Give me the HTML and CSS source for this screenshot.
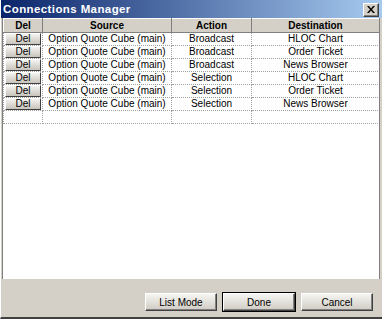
FILE: index.html
```html
<!DOCTYPE html>
<html lang="en">
<head>
    <meta charset="UTF-8">
    <title>Connections Manager</title>
    <link rel="stylesheet" href="styles.css">
</head>
<body>
    <div class="window">
        <div class="titlebar">
            <span class="title">Connections Manager</span>
            <button class="close" type="button">
                <svg width="8" height="7" viewBox="0 0 8 7"><path d="M0 0h2l2 2.5 2-2.5h2l-3 3.5 3 3.5h-2l-2-2.5-2 2.5h-2l3-3.5z" fill="#000"/></svg>
            </button>
        </div>
        <div class="grid-area">
            <table class="grid">
                <colgroup>
                    <col class="c-del">
                    <col class="c-src">
                    <col class="c-act">
                    <col class="c-dst">
                </colgroup>
                <thead>
                    <tr>
                        <th>Del</th>
                        <th>Source</th>
                        <th>Action</th>
                        <th>Destination</th>
                    </tr>
                </thead>
                <tbody>
                    <tr>
                        <td class="del-cell"><button class="del">Del</button></td>
                        <td>Option Quote Cube (main)</td>
                        <td>Broadcast</td>
                        <td>HLOC Chart</td>
                    </tr>
                    <tr>
                        <td class="del-cell"><button class="del">Del</button></td>
                        <td>Option Quote Cube (main)</td>
                        <td>Broadcast</td>
                        <td>Order Ticket</td>
                    </tr>
                    <tr>
                        <td class="del-cell"><button class="del">Del</button></td>
                        <td>Option Quote Cube (main)</td>
                        <td>Broadcast</td>
                        <td>News Browser</td>
                    </tr>
                    <tr>
                        <td class="del-cell"><button class="del">Del</button></td>
                        <td>Option Quote Cube (main)</td>
                        <td>Selection</td>
                        <td>HLOC Chart</td>
                    </tr>
                    <tr>
                        <td class="del-cell"><button class="del">Del</button></td>
                        <td>Option Quote Cube (main)</td>
                        <td>Selection</td>
                        <td>Order Ticket</td>
                    </tr>
                    <tr>
                        <td class="del-cell"><button class="del">Del</button></td>
                        <td>Option Quote Cube (main)</td>
                        <td>Selection</td>
                        <td>News Browser</td>
                    </tr>
                    <tr class="empty">
                        <td></td>
                        <td></td>
                        <td></td>
                        <td></td>
                    </tr>
                </tbody>
            </table>
        </div>
        <div class="footer">
            <button class="btn">List Mode</button>
            <button class="btn default">Done</button>
            <button class="btn">Cancel</button>
        </div>
    </div>
</body>
</html>
```

FILE: styles.css
```css
body {
    margin: 0;
    padding: 0;
    font-family: "Liberation Sans", Arial, sans-serif;
    background: #d4d0c8;
}
.window {
    width: 382px;
    height: 319px;
    box-sizing: border-box;
    background: #d4d0c8;
    border-left: 1px solid #ffffff;
    border-bottom: 2px solid #404040;
    display: flex;
    flex-direction: column;
}
.titlebar {
    height: 18px;
    flex: none;
    display: flex;
    align-items: center;
    justify-content: space-between;
    padding: 0 3px 0 2px;
    background: linear-gradient(to right, #0a246a, #a6caf0);
}
.title {
    color: #fff;
    font-weight: bold;
    font-size: 11.5px;
    letter-spacing: 0.4px;
}
.close {
    width: 16px;
    height: 14px;
    padding: 0;
    margin-top: 1px;
    display: flex;
    align-items: center;
    justify-content: center;
    background: #d4d0c8;
    border: 1px solid;
    border-color: #fff #404040 #404040 #fff;
    box-shadow: inset -1px -1px 0 #808080;
}
.grid-area {
    flex: 1;
    margin: 0 2px 0 1px;
    background: #fff;
    border-left: 1px solid #808080;
    border-right: 1px solid #808080;
    overflow: hidden;
}
.grid {
    border-collapse: collapse;
    table-layout: fixed;
    width: 376px;
    font-size: 10px;
    color: #000;
}
.c-del { width: 39px; }
.c-src { width: 129px; }
.c-act { width: 80px; }
.c-dst { width: 128px; }
.grid th {
    height: 14px;
    padding: 0;
    box-sizing: border-box;
    background: #d4d0c8;
    font-weight: bold;
    font-size: 10px;
    border-top: 1px solid #fff;
    border-left: 1px solid #fff;
    border-right: 1px solid #808080;
    border-bottom: 1px solid #808080;
    line-height: 12px;
}
.grid td {
    height: 13px;
    padding: 0;
    box-sizing: border-box;
    text-align: center;
    line-height: 12px;
    border: 1px dotted #a0a0a0;
    white-space: nowrap;
    overflow: hidden;
}
.grid td.del-cell {
    padding: 0 1px;
}
.del {
    display: block;
    width: 100%;
    height: 12px;
    padding: 0;
    font-family: "Liberation Sans", Arial, sans-serif;
    font-size: 10px;
    line-height: 10px;
    color: #000;
    background: linear-gradient(#f4f3f0, #c8c4bc);
    border: 1px solid;
    border-color: #ffffff #404040 #404040 #ffffff;
}
.footer {
    flex: none;
    height: 38px;
    display: flex;
    justify-content: flex-end;
    align-items: flex-start;
    gap: 6px;
    padding: 14px 9px 0 0;
    box-sizing: border-box;
}
.btn {
    width: 72px;
    height: 18px;
    padding: 0;
    font-family: "Liberation Sans", Arial, sans-serif;
    font-size: 10px;
    color: #000;
    background: linear-gradient(#f6f5f2, #d0ccc4);
    border: 1px solid;
    border-color: #ffffff #404040 #404040 #ffffff;
    box-shadow: inset -1px -1px 0 #808080;
}
.btn.default {
    outline: 1px solid #000;
}
```
